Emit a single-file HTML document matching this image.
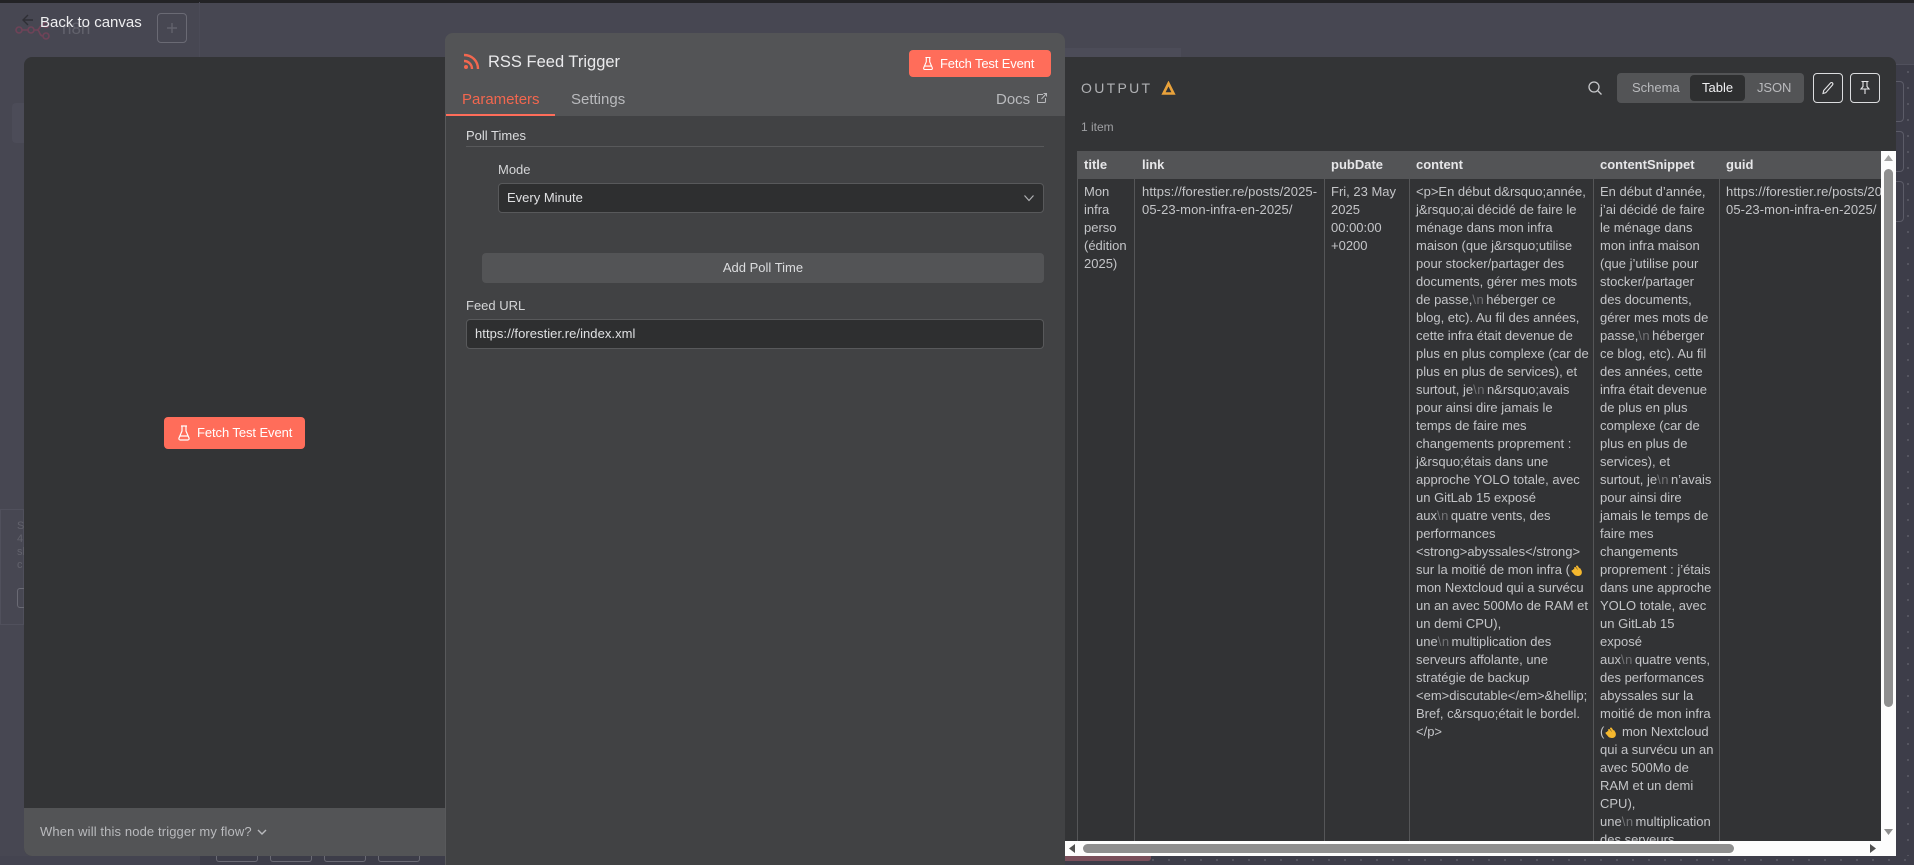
<!DOCTYPE html>
<html><head><meta charset="utf-8"><title>RSS Feed Trigger</title>
<style>
*{box-sizing:border-box;margin:0;padding:0}
html,body{width:1914px;height:865px;overflow:hidden;background:#474752;font-family:"Liberation Sans",sans-serif}
.a{position:absolute;white-space:nowrap}
.h{position:absolute;white-space:nowrap;font-size:13px;font-weight:700;line-height:18px;color:#e6e6e8;top:156px}
.c{position:absolute;white-space:nowrap;font-size:13px;line-height:18px;color:#c4c5c8;top:183px}
.u{letter-spacing:.1px}
.n{color:#737477;letter-spacing:.5px;margin-right:2px}
.v{position:absolute;top:179px;width:1px;height:662px;background:#555658}
svg{position:absolute;display:block}
svg.e{position:static;display:inline-block;vertical-align:-3px}
</style></head><body>

<!-- background canvas -->
<div class="a" style="left:0;top:0;width:1914px;height:3px;background:#232326"></div>
<div class="a" style="left:199px;top:2px;width:1px;height:55px;background:#4b4b57"></div>
<svg style="left:14px;top:22px" width="38" height="20" viewBox="0 0 38 20" fill="none" stroke="#6f4358" stroke-width="1.6"><circle cx="5" cy="8" r="3"/><circle cx="17" cy="8" r="3"/><circle cx="32" cy="14" r="3"/><circle cx="32" cy="3" r="2.5"/><path d="M8 8h6M20 8h3c3 0 2 6 6 6M23 8c3 0 2-5 6-5"/></svg>
<div class="a" style="left:62px;top:18px;font-size:17px;line-height:22px;color:#62626c">n8n</div>
<svg style="left:21px;top:13px" width="14" height="14" viewBox="0 0 14 14" fill="none" stroke="#2f2f35" stroke-width="1.4"><path d="M12 7H2M7 2L2 7l5 5"/></svg>
<div class="a" style="left:157px;top:13px;width:30px;height:30px;border:1px solid #6a6a74;border-radius:4px"></div>
<svg style="left:166px;top:22px" width="12" height="12" viewBox="0 0 12 12" fill="none" stroke="#62626c" stroke-width="1.4"><path d="M6 1v10M1 6h10"/></svg>
<div class="a" style="left:12px;top:103px;width:12px;height:40px;background:#4c4c58;border-radius:4px 0 0 4px"></div>
<div class="a" style="left:0;top:509px;width:24px;height:116px;border:1px solid #50505c;background:#474752"></div>
<div class="a" style="left:17px;top:520px;font-size:11px;line-height:13px;color:#62626c">S<br>4<br>sl<br>c</div>
<div class="a" style="left:17px;top:588px;width:10px;height:20px;border:1px solid #6a6a74;border-radius:3px 0 0 3px"></div>
<div class="a" style="left:0;top:856px;width:445px;height:9px;background:#444450"></div>
<div class="a" style="left:200px;top:856px;width:245px;height:9px;background:#3d3d49"></div>
<div class="a" style="left:216px;top:856px;width:42px;height:6px;border:1px solid #6a6a74;border-top:0;border-radius:0 0 3px 3px"></div>
<div class="a" style="left:270px;top:856px;width:42px;height:6px;border:1px solid #6a6a74;border-top:0;border-radius:0 0 3px 3px"></div>
<div class="a" style="left:324px;top:856px;width:42px;height:6px;border:1px solid #6a6a74;border-top:0;border-radius:0 0 3px 3px"></div>
<div class="a" style="left:378px;top:856px;width:42px;height:6px;border:1px solid #6a6a74;border-top:0;border-radius:0 0 3px 3px"></div>
<div class="a" style="left:1065px;top:856px;width:849px;height:9px;background:#3d3d49 radial-gradient(circle,#6c6c76 .6px,transparent 1px) 0 -4px/16px 16px"></div>
<div class="a" style="left:1065px;top:856px;width:86px;height:5px;background:#7a4f5b;border-radius:0 0 3px 0"></div>
<div class="a" style="left:1896px;top:64px;width:18px;height:792px;background:#3d3d49 radial-gradient(circle,#6c6c76 .6px,transparent 1px) 4px 0/16px 16px"></div>
<div class="a" style="left:1896px;top:64px;width:18px;height:1px;background:#50505c"></div>
<div class="a" style="left:1890px;top:81px;width:14px;height:41px;border:1px solid #5c5c68;border-radius:4px"></div>
<div class="a" style="left:1890px;top:131px;width:14px;height:41px;border:1px solid #5c5c68;border-radius:4px"></div>
<div class="a" style="left:1890px;top:181px;width:14px;height:41px;border:1px solid #5c5c68;border-radius:4px"></div>
<div class="a" style="left:1065px;top:48px;width:116px;height:9px;background:#4c4c58"></div>

<div class="a" style="left:40px;top:14px;font-size:15px;line-height:18px;color:#eeeef0;font-weight:400">Back to canvas</div>

<!-- left panel -->
<div class="a" style="left:24px;top:57px;width:422px;height:799px;background:#333436;border-radius:8px 0 0 8px"></div>
<div class="a" style="left:24px;top:808px;width:422px;height:48px;background:#535456;border-radius:0 0 0 8px"></div>
<div class="a" style="left:164px;top:417px;width:141px;height:32px;background:#ff6d5a;border-radius:4px"></div>
<svg style="left:177px;top:425px" width="14" height="16" viewBox="0 0 14 16" fill="none" stroke="#fff" stroke-width="1.2"><path d="M4 1h6M5 1v5L2 13c-.4 1 .2 2 1.2 2h7.6c1 0 1.6-1 1.2-2L9 6V1M3 11h8"/></svg>
<div class="a" style="left:197px;top:424px;font-size:13px;letter-spacing:-.08px;line-height:18px;color:#fff">Fetch Test Event</div>
<div class="a" style="left:40px;top:823px;font-size:13px;letter-spacing:.12px;line-height:18px;color:#b9babd">When will this node trigger my flow?</div>
<svg style="left:256px;top:827px" width="12" height="10" viewBox="0 0 12 10" fill="none" stroke="#b9babd" stroke-width="1.4"><path d="M2 3l4 4 4-4"/></svg>

<!-- main panel -->
<div class="a" style="left:445px;top:33px;width:620px;height:832px;background:#414244;border-left:1px solid #58595b;border-radius:8px 8px 0 0"></div>
<div class="a" style="left:445px;top:33px;width:620px;height:83px;background:#535456;border-radius:8px 8px 0 0"></div>
<svg style="left:463px;top:53px" width="17" height="17" viewBox="0 0 17 17" fill="none" stroke="#f2674f" stroke-width="2.4"><path d="M1 2c8 0 14 6 14 14M1 8c4.500 0 8 3.500 8 8"/><circle cx="3" cy="14" r="2" fill="#f2674f" stroke="none"/></svg>
<div class="a" style="left:488px;top:51px;font-size:16.5px;line-height:22px;color:#eaeaec">RSS Feed Trigger</div>
<div class="a" style="left:909px;top:50px;width:142px;height:27px;background:#ff6d5a;border-radius:4px"></div>
<svg style="left:922px;top:56px" width="12" height="15" viewBox="0 0 14 16" fill="none" stroke="#fff" stroke-width="1.3"><path d="M4 1h6M5 1v5L2 13c-.4 1 .2 2 1.200 2h7.600c1 0 1.600-1 1.200-2L9 6V1M3 11h8"/></svg>
<div class="a" style="left:940px;top:55px;font-size:13px;letter-spacing:-.15px;line-height:18px;color:#fff">Fetch Test Event</div>
<div class="a" style="left:462px;top:91px;font-size:15px;line-height:18px;color:#f2674f">Parameters</div>
<div class="a" style="left:571px;top:91px;font-size:15px;line-height:18px;color:#b9babd">Settings</div>
<div class="a" style="left:446px;top:114px;width:109px;height:2px;background:#ff6d5a"></div>
<div class="a" style="left:996px;top:91px;font-size:15px;line-height:18px;color:#b9babd">Docs</div>
<svg style="left:1036px;top:92px" width="12" height="12" viewBox="0 0 12 12" fill="none" stroke="#b9babd" stroke-width="1"><path d="M7 2.500H2.500a1 1 0 0 0-1 1v6a1 1 0 0 0 1 1h6a1 1 0 0 0 1-1V6M5.500 7L10.500 1.500M7.500 1.500h3v3"/></svg>
<div class="a" style="left:466px;top:127px;font-size:13px;line-height:18px;color:#dcdddf;font-weight:400">Poll Times</div>
<div class="a" style="left:466px;top:146px;width:578px;height:1px;background:#58595b"></div>
<div class="a" style="left:498px;top:161px;font-size:13px;line-height:18px;color:#d4d5d7">Mode</div>
<div class="a" style="left:498px;top:183px;width:546px;height:30px;background:#2e2f30;border:1px solid #58595b;border-radius:4px"></div>
<div class="a" style="left:507px;top:189px;font-size:13px;line-height:18px;color:#e0e1e3">Every Minute</div>
<svg style="left:1023px;top:193px" width="12" height="10" viewBox="0 0 12 10" fill="none" stroke="#b0b1b4" stroke-width="1.200"><path d="M1.500 2.500L6 7.500l4.500-5"/></svg>
<div class="a" style="left:482px;top:253px;width:562px;height:30px;background:#535456;border-radius:4px"></div>
<div class="a" style="left:482px;top:259px;width:562px;text-align:center;font-size:13px;line-height:18px;color:#dcdddf">Add Poll Time</div>
<div class="a" style="left:466px;top:297px;font-size:13px;line-height:18px;color:#d4d5d7">Feed URL</div>
<div class="a" style="left:466px;top:319px;width:578px;height:30px;background:#2e2f30;border:1px solid #58595b;border-radius:4px"></div>
<div class="a" style="left:475px;top:325px;font-size:13px;letter-spacing:.05px;line-height:18px;color:#e0e1e3">https://forestier.re/index.xml</div>

<!-- output panel -->
<div class="a" style="left:1065px;top:57px;width:831px;height:799px;background:#333436;border-radius:0 8px 0 0"></div>
<div class="a" style="left:1081px;top:79px;font-size:14px;letter-spacing:2.3px;line-height:18px;color:#b0b1b4">OUTPUT</div>
<svg style="left:1161px;top:81px" width="15" height="14" viewBox="0 0 15 14" fill="none" stroke="#e9a23b" stroke-width="2.6"><path d="M7.500 2.500L2.500 12.500h10z"/></svg>
<svg style="left:1587px;top:80px" width="16" height="16" viewBox="0 0 16 16" fill="none" stroke="#c8c9cc" stroke-width="1.300"><circle cx="7" cy="7" r="5"/><path d="M11 11l3.500 3.500"/></svg>
<div class="a" style="left:1617px;top:73px;width:187px;height:30px;background:#535456;border-radius:4px"></div>
<div class="a" style="left:1690px;top:75px;width:55px;height:26px;background:#2e2f30;border-radius:4px"></div>
<div class="a" style="left:1632px;top:79px;font-size:13px;line-height:18px;color:#b9babd">Schema</div>
<div class="a" style="left:1702px;top:79px;font-size:13px;line-height:18px;color:#f0f0f2">Table</div>
<div class="a" style="left:1757px;top:79px;font-size:13px;letter-spacing:-.1px;line-height:18px;color:#b9babd">JSON</div>
<div class="a" style="left:1813px;top:73px;width:30px;height:30px;border:1px solid #dcdddf;border-radius:4px"></div>
<svg style="left:1821px;top:81px" width="14" height="14" viewBox="0 0 14 14" fill="none" stroke="#e6e6e8" stroke-width="1.100"><path d="M2 12.500l.7-3L9.500 2c.7-.7 1.500-.6 2 0s.6 1.300 0 2L4.800 11.700z"/></svg>
<div class="a" style="left:1850px;top:73px;width:30px;height:30px;border:1px solid #dcdddf;border-radius:4px"></div>
<svg style="left:1858px;top:80px" width="14" height="15" viewBox="0 0 14 15" fill="none" stroke="#e6e6e8" stroke-width="1.100"><path d="M3.500 1.500h7M5 1.500v5L3 9h8L9 6.500v-5M7 9v5"/></svg>
<div class="a" style="left:1081px;top:118px;font-size:12px;line-height:18px;color:#9fa0a3">1 item</div>

<!-- table -->
<div class="a" style="left:1077px;top:151px;width:804px;height:690px;overflow:hidden;background:#323335" id="tbl"></div>
<div class="a" style="left:1077px;top:151px;width:804px;height:28px;background:#535456"></div>
<div class="v" style="left:1077px"></div><div class="v" style="left:1134px"></div><div class="v" style="left:1324px"></div><div class="v" style="left:1409px"></div><div class="v" style="left:1593px"></div><div class="v" style="left:1719px"></div>
<div class="h" style="left:1084px">title</div>
<div class="h" style="left:1142px">link</div>
<div class="h" style="left:1331px">pubDate</div>
<div class="h" style="left:1416px">content</div>
<div class="h" style="left:1600px">contentSnippet</div>
<div class="h" style="left:1726px">guid</div>

<div class="c" style="left:1084px">Mon<br>infra<br>perso<br>(édition<br>2025)</div>
<div class="c u" style="left:1142px">https://forestier.re/posts/2025-<br>05-23-mon-infra-en-2025/</div>
<div class="c" style="left:1331px">Fri, 23 May<br>2025<br>00:00:00<br>+0200</div>
<div class="c" style="left:1416px">&lt;p&gt;En début d&amp;rsquo;année,<br>j&amp;rsquo;ai décidé de faire le<br>ménage dans mon infra<br>maison (que j&amp;rsquo;utilise<br>pour stocker/partager des<br>documents, gérer mes mots<br>de passe,<span class="n">\n</span>héberger ce<br>blog, etc). Au fil des années,<br>cette infra était devenue de<br>plus en plus complexe (car de<br>plus en plus de services), et<br>surtout, je<span class="n">\n</span>n&amp;rsquo;avais<br>pour ainsi dire jamais le<br>temps de faire mes<br>changements proprement :<br>j&amp;rsquo;étais dans une<br>approche YOLO totale, avec<br>un GitLab 15 exposé<br>aux<span class="n">\n</span>quatre vents, des<br>performances<br>&lt;strong&gt;abyssales&lt;/strong&gt;<br>sur la moitié de mon infra (<svg class="e" width="14" height="14" viewBox="0 0 14 14" fill="none"><path d="M4 7L6.500 10M2.500 8L5.500 11.500M5 5L8 9M7 3.500L10 8" stroke="#f5b82e" stroke-width="2" stroke-linecap="round"/><path d="M4 8c-.5 2 .5 5 4 5s4.500-3 3.500-5.500L10 5 7 7z" fill="#f5b82e"/></svg><br>mon Nextcloud qui a survécu<br>un an avec 500Mo de RAM et<br>un demi CPU),<br>une<span class="n">\n</span>multiplication des<br>serveurs affolante, une<br>stratégie de backup<br>&lt;em&gt;discutable&lt;/em&gt;&amp;hellip;<br>Bref, c&amp;rsquo;était le bordel.<br>&lt;/p&gt;</div>
<div class="a" style="left:1594px;top:179px;width:125px;height:662px;overflow:hidden"><div class="c" style="left:6px;top:4px">En début d’année,<br>j’ai décidé de faire<br>le ménage dans<br>mon infra maison<br>(que j’utilise pour<br>stocker/partager<br>des documents,<br>gérer mes mots de<br>passe,<span class="n">\n</span>héberger<br>ce blog, etc). Au fil<br>des années, cette<br>infra était devenue<br>de plus en plus<br>complexe (car de<br>plus en plus de<br>services), et<br>surtout, je<span class="n">\n</span>n’avais<br>pour ainsi dire<br>jamais le temps de<br>faire mes<br>changements<br>proprement : j’étais<br>dans une approche<br>YOLO totale, avec<br>un GitLab 15<br>exposé<br>aux<span class="n">\n</span>quatre vents,<br>des performances<br>abyssales sur la<br>moitié de mon infra<br>(<svg class="e" width="14" height="14" viewBox="0 0 14 14" fill="none"><path d="M4 7L6.500 10M2.500 8L5.500 11.500M5 5L8 9M7 3.500L10 8" stroke="#f5b82e" stroke-width="2" stroke-linecap="round"/><path d="M4 8c-.5 2 .5 5 4 5s4.500-3 3.500-5.500L10 5 7 7z" fill="#f5b82e"/></svg> mon Nextcloud<br>qui a survécu un an<br>avec 500Mo de<br>RAM et un demi<br>CPU),<br>une<span class="n">\n</span>multiplication<br>des serveurs</div></div>
<div class="a" style="left:1720px;top:179px;width:161px;height:60px;overflow:hidden"><div class="c u" style="left:6px;top:4px">https://forestier.re/posts/2025-<br>05-23-mon-infra-en-2025/</div></div>

<!-- scrollbars -->
<div class="a" style="left:1881px;top:151px;width:15px;height:705px;background:#fdfdfd"></div>
<div class="a" style="left:1065px;top:841px;width:831px;height:15px;background:#fdfdfd"></div>
<div class="a" style="left:1884px;top:169px;width:9px;height:538px;background:#8f8f8f;border-radius:5px"></div>
<div class="a" style="left:1083px;top:844px;width:651px;height:9px;background:#8f8f8f;border-radius:5px"></div>
<svg style="left:1884px;top:155px" width="9" height="6"><path d="M0 6L4.500 0 9 6z" fill="#a3a3a3"/></svg>
<svg style="left:1884px;top:829px" width="9" height="6"><path d="M0 0L4.500 6 9 0z" fill="#8f8f8f"/></svg>
<svg style="left:1069px;top:844px" width="6" height="9"><path d="M6 0L0 4.500 6 9z" fill="#505050"/></svg>
<svg style="left:1870px;top:844px" width="6" height="9"><path d="M0 0L6 4.500 0 9z" fill="#505050"/></svg>
</body></html>
